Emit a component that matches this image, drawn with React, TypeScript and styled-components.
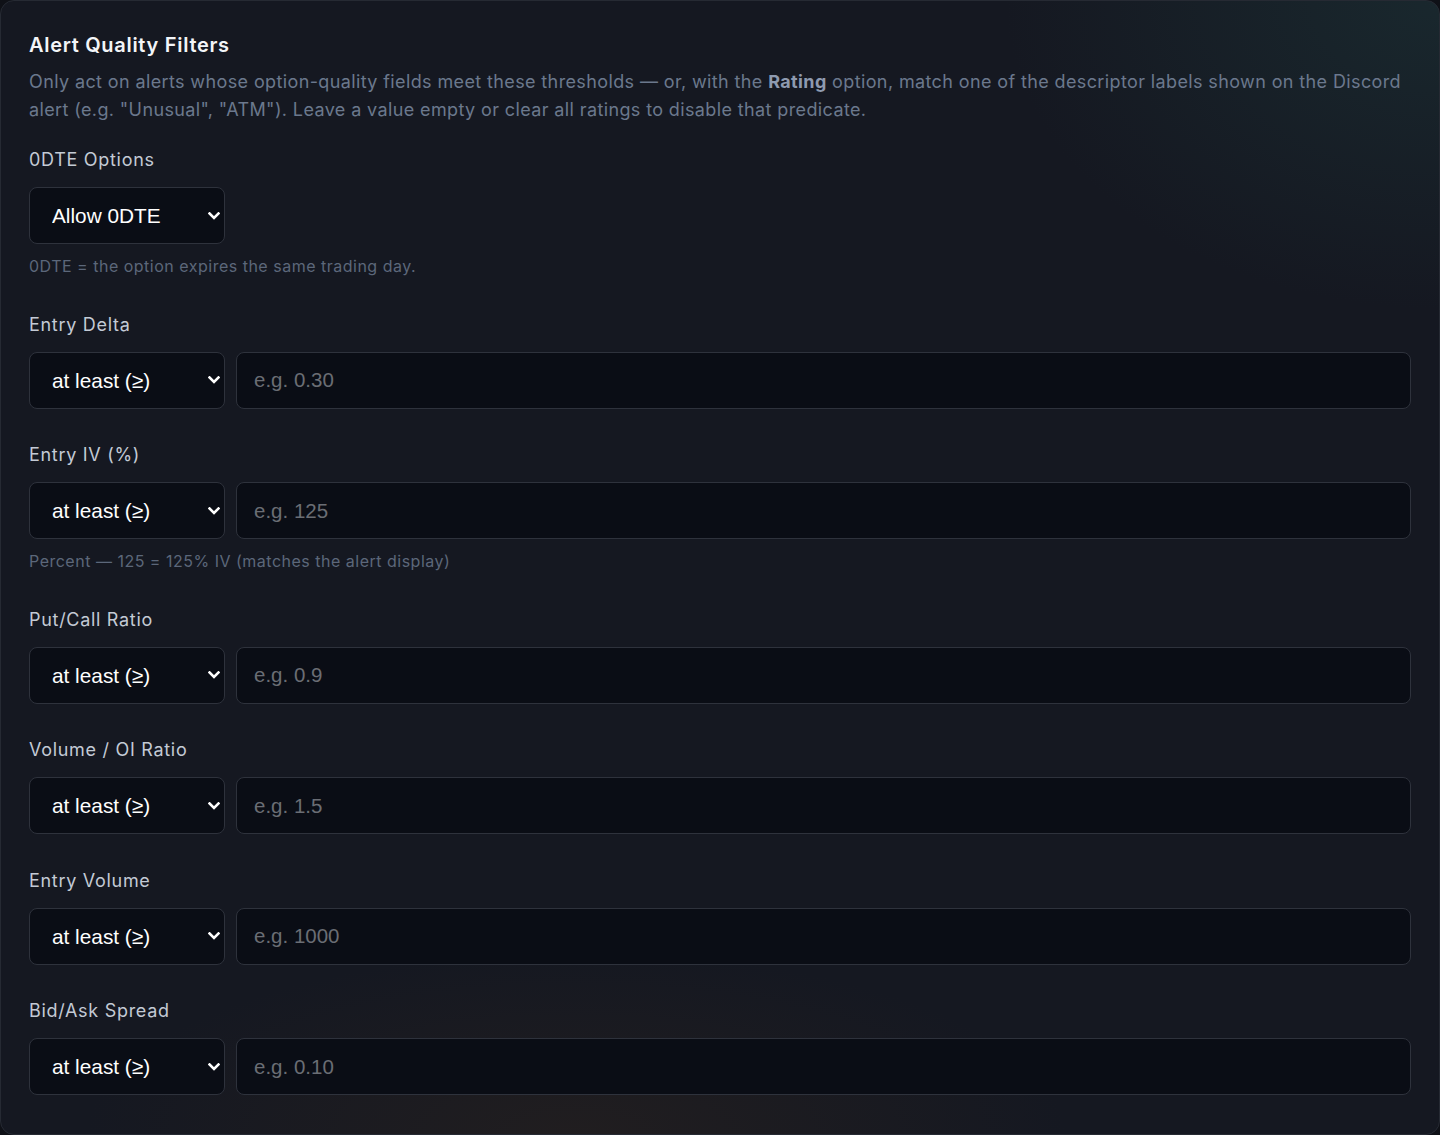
import { FunctionComponent } from 'react';
import styled, { createGlobalStyle } from 'styled-components';

const GlobalStyle = createGlobalStyle`
  html, body {
    margin: 0;
    padding: 0;
    background: #0f1117;
  }
  * {
    box-sizing: border-box;
  }
`;

const Card = styled.section`
  min-height: 1135px;
  width: 1440px;
  padding: 30px 28px 39px 28px;
  border: 1px solid #262a33;
  border-radius: 14px;
  background:
    radial-gradient(ellipse 620px 440px at 100% 0%, rgba(28, 50, 54, 0.6), transparent 70%),
    radial-gradient(ellipse 700px 260px at 40% 100%, rgba(44, 35, 30, 0.5), transparent 70%),
    #151821;
  font-family: Inter, 'Noto Sans', sans-serif;
`;

const Header = styled.header`
  margin-bottom: 23px;
`;

const Title = styled.h2`
  margin: 0 0 9px;
  font-size: 20px;
  line-height: 28px;
  font-weight: 600;
  letter-spacing: 0.7px;
  color: #f3f5f8;
`;

const Description = styled.p`
  margin: 0;
  font-size: 18px;
  line-height: 28px;
  letter-spacing: 0.38px;
  color: #6b788d;

  strong {
    color: #8e9ab0;
    font-weight: 700;
  }
`;

const Fields = styled.div`
  display: flex;
  flex-direction: column;
  gap: 33.5px;
`;

const Field = styled.div`
  display: flex;
  flex-direction: column;
`;

const Label = styled.label`
  margin-bottom: 14px;
  font-size: 18px;
  line-height: 26px;
  letter-spacing: 0.7px;
  color: #c3cad5;
`;

const Row = styled.div`
  display: flex;
  gap: 11px;
`;

const SelectWrap = styled.div`
  position: relative;
  width: 196px;
  flex-shrink: 0;
`;

const Select = styled.select`
  appearance: none;
  width: 100%;
  height: 57px;
  padding: 0 32px 0 22px;
  border: 1px solid #2e323c;
  border-radius: 8px;
  background: #0a0d15;
  color: #ffffff;
  font-family: 'Liberation Sans', Arial, sans-serif;
  font-size: 20.8px;
  outline: none;
`;

const Chevron = styled.svg`
  position: absolute;
  right: 5px;
  top: 50%;
  width: 12px;
  height: 8px;
  margin-top: -4px;
  pointer-events: none;
`;

const Input = styled.input`
  flex: 1;
  height: 57px;
  padding: 0 17px;
  border: 1px solid #2e323c;
  border-radius: 8px;
  background: #0a0d15;
  color: #ffffff;
  font-family: 'Liberation Sans', Arial, sans-serif;
  font-size: 20.5px;
  outline: none;

  &::placeholder {
    color: #6a6d74;
  }
`;

const Hint = styled.p`
  margin: 10px 0 0;
  font-size: 16px;
  line-height: 24px;
  letter-spacing: 0.5px;
  color: #5c677a;
`;

interface DropdownProps {
  value: string;
  options: { value: string; label: string }[];
}

const Dropdown: FunctionComponent<DropdownProps> = ({ value, options }) => (
  <SelectWrap>
    <Select defaultValue={value}>
      {options.map((o) => (
        <option key={o.value} value={o.value}>
          {o.label}
        </option>
      ))}
    </Select>
    <Chevron viewBox='0 0 12 8' fill='none'>
      <path d='M1.5 1.5L6 6L10.5 1.5' stroke='#ffffff' strokeWidth='2.6' strokeLinecap='square' />
    </Chevron>
  </SelectWrap>
);

const comparators = [
  { value: 'gte', label: 'at least (≥)' },
  { value: 'lte', label: 'at most (≤)' },
];

interface ThresholdProps {
  label: string;
  placeholder: string;
  hint?: string;
}

const Threshold: FunctionComponent<ThresholdProps> = ({ label, placeholder, hint }) => (
  <Field>
    <Label>{label}</Label>
    <Row>
      <Dropdown value='gte' options={comparators} />
      <Input placeholder={placeholder} />
    </Row>
    {hint && <Hint>{hint}</Hint>}
  </Field>
);

const thresholds: ThresholdProps[] = [
  { label: 'Entry Delta', placeholder: 'e.g. 0.30' },
  {
    label: 'Entry IV (%)',
    placeholder: 'e.g. 125',
    hint: 'Percent — 125 = 125% IV (matches the alert display)',
  },
  { label: 'Put/Call Ratio', placeholder: 'e.g. 0.9' },
  { label: 'Volume / OI Ratio', placeholder: 'e.g. 1.5' },
  { label: 'Entry Volume', placeholder: 'e.g. 1000' },
  { label: 'Bid/Ask Spread', placeholder: 'e.g. 0.10' },
];

const App: FunctionComponent = () => (
  <>
    <GlobalStyle />
    <Card>
      <Header>
        <Title>Alert Quality Filters</Title>
        <Description>
          Only act on alerts whose option-quality fields meet these thresholds — or, with the{' '}
          <strong>Rating</strong> option, match one of the descriptor labels shown on the Discord
          alert (e.g. "Unusual", "ATM"). Leave a value empty or clear all ratings to disable that
          predicate.
        </Description>
      </Header>
      <Fields>
        <Field>
          <Label>0DTE Options</Label>
          <Row>
            <Dropdown
              value='allow'
              options={[
                { value: 'allow', label: 'Allow 0DTE' },
                { value: 'block', label: 'Block 0DTE' },
                { value: 'only', label: 'Only 0DTE' },
              ]}
            />
          </Row>
          <Hint>0DTE = the option expires the same trading day.</Hint>
        </Field>
        {thresholds.map((t) => (
          <Threshold key={t.label} {...t} />
        ))}
      </Fields>
    </Card>
  </>
);

export default App;
